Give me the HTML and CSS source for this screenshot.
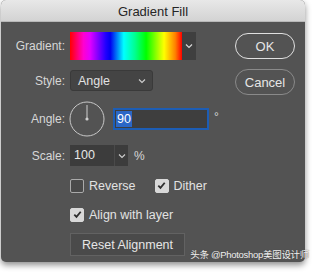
FILE: index.html
```html
<!DOCTYPE html>
<html>
<head>
<meta charset="utf-8">
<link rel="stylesheet" href="styles.css">
</head>
<body>
<div class="window">
  <div class="titlebar">Gradient Fill</div>
  <div class="content">
    <div class="form">
      <div class="row row-gradient">
        <span class="label">Gradient:</span>
        <div class="gradient-picker">
          <div class="swatch"></div>
          <div class="drop"><svg width="8" height="6" viewBox="0 0 8 6"><path d="M1 1.5 L4 4.5 L7 1.5" fill="none" stroke="#d8d8d8" stroke-width="1.2"/></svg></div>
        </div>
      </div>
      <div class="row row-style">
        <span class="label">Style:</span>
        <div class="select">
          <span>Angle</span>
          <svg width="8" height="6" viewBox="0 0 8 6"><path d="M1 1.5 L4 4.5 L7 1.5" fill="none" stroke="#cfcfcf" stroke-width="1.1"/></svg>
        </div>
      </div>
      <div class="row row-angle">
        <span class="label">Angle:</span>
        <svg class="dial" width="36" height="36" viewBox="0 0 36 36"><circle cx="18" cy="18" r="17" fill="none" stroke="#c8c8c8" stroke-width="1"/><line x1="18" y1="4" x2="18" y2="18" stroke="#d0d0d0" stroke-width="1"/><circle cx="18" cy="18" r="1.6" fill="#d0d0d0"/></svg>
        <div class="angle-input"><span class="sel">90</span></div>
        <span class="deg">°</span>
      </div>
      <div class="row row-scale">
        <span class="label">Scale:</span>
        <div class="combo">
          <span class="val">100</span>
          <span class="cdrop"><svg width="8" height="6" viewBox="0 0 8 6"><path d="M1 1.5 L4 4.5 L7 1.5" fill="none" stroke="#cfcfcf" stroke-width="1.1"/></svg></span>
        </div>
        <span class="pct">%</span>
      </div>
      <div class="row row-checks">
        <span class="label"></span>
        <label class="check"><span class="box"></span>Reverse</label>
        <label class="check dither"><span class="box on"><svg width="11" height="11" viewBox="0 0 11 11"><path d="M2.3 5.6 L4.5 7.9 L8.7 2.8" fill="none" stroke="#2e2e2e" stroke-width="1.8"/></svg></span>Dither</label>
      </div>
      <div class="row row-align">
        <span class="label"></span>
        <label class="check"><span class="box on"><svg width="11" height="11" viewBox="0 0 11 11"><path d="M2.3 5.6 L4.5 7.9 L8.7 2.8" fill="none" stroke="#2e2e2e" stroke-width="1.8"/></svg></span>Align with layer</label>
      </div>
      <div class="row row-reset">
        <span class="label"></span>
        <button class="reset">Reset Alignment</button>
      </div>
    </div>
    <div class="buttons">
      <button class="pill ok">OK</button>
      <button class="pill cancel">Cancel</button>
    </div>
  </div>
  <div class="watermark">头条 @Photoshop美图设计师</div>
</div>
</body>
</html>
```
FILE: styles.css
```css
html, body {
  margin: 0;
  padding: 0;
  background: #ffffff;
  width: 314px;
  height: 275px;
  overflow: hidden;
  font-family: "Liberation Sans", Arial, "Noto Sans CJK SC", sans-serif;
}

.window {
  position: relative;
  margin-left: 1px;
  width: 304px;
  height: 262px;
  background: #535353;
  border-radius: 5px;
  box-shadow: 0 3px 6px rgba(0,0,0,0.45);
  display: flex;
  flex-direction: column;
}

.titlebar {
  height: 22px;
  line-height: 23px;
  text-align: center;
  font-size: 13px;
  color: #262626;
  background: linear-gradient(#e8e8e8, #d3d3d3);
  border-bottom: 1px solid #b8b8b8;
  border-radius: 5px 5px 0 0;
  box-sizing: border-box;
  flex: none;
}

.content {
  display: flex;
  flex: 1;
}

.form {
  width: 230px;
  display: flex;
  flex-direction: column;
}

.row {
  display: flex;
  align-items: center;
}

.label {
  width: 64px;
  text-align: right;
  font-size: 12px;
  color: #d7d7d7;
  margin-right: 5px;
  flex: none;
}

.row-gradient { margin-top: 10px; height: 28px; }

.gradient-picker {
  display: flex;
  height: 28px;
}
.swatch {
  width: 112px;
  height: 28px;
  background: linear-gradient(to right,
    #ff0000 0%, #ff00d0 12%, #e000ff 18%, #2000ff 32%, #0000f0 36%,
    #00ffff 48%, #00ff90 58%, #00ff00 68%, #c0ff00 80%, #ffff00 84%, #ff8000 94%, #ff0000 100%);
}
.drop {
  width: 14px;
  height: 28px;
  background: #3f3f3f;
  display: flex;
  align-items: center;
  justify-content: center;
}

.row-style { margin-top: 10px; height: 21px; }
.select {
  width: 83px;
  height: 21px;
  box-sizing: border-box;
  background: #444444;
  border: 1px solid #3a3a3a;
  border-radius: 3px;
  display: flex;
  align-items: center;
  justify-content: space-between;
  padding: 0 6px 0 7px;
  font-size: 12.5px;
  color: #e2e2e2;
}

.row-angle { margin-top: 10px; height: 36px; }
.dial { flex: none; margin-left: -1px; }
.angle-input {
  margin-left: 8px;
  width: 96px;
  height: 22px;
  box-sizing: border-box;
  border: 2px solid #1d5db4;
  background: #3e3e3e;
  display: flex;
  align-items: center;
  padding-left: 1px;
}
.sel {
  background: #2b67c6;
  color: #ffffff;
  font-size: 12.5px;
  line-height: 16px;
  padding: 0 1px;
}
.deg {
  font-size: 12px;
  color: #d7d7d7;
  margin-left: 5px;
  margin-top: -4px;
}

.row-scale { margin-top: 8px; height: 21px; }
.combo {
  display: flex;
  height: 21px;
  background: #3c3c3c;
}
.val {
  width: 44px;
  font-size: 12.5px;
  color: #e6e6e6;
  padding-left: 4px;
  box-sizing: border-box;
  line-height: 21px;
}
.cdrop {
  width: 13px;
  border-left: 1px solid #4a4a4a;
  display: flex;
  align-items: center;
  justify-content: center;
}
.pct {
  font-size: 12px;
  color: #d7d7d7;
  margin-left: 6px;
}

.row-checks { margin-top: 12px; height: 15px; }
.row-align { margin-top: 14px; height: 15px; }

.check {
  display: flex;
  align-items: center;
  font-size: 12.5px;
  color: #e2e2e2;
}
.dither { margin-left: 19px; }
.box {
  width: 14px;
  height: 14px;
  box-sizing: border-box;
  border: 1px solid #aaaaaa;
  background: #4a4a4a;
  border-radius: 2px;
  margin-right: 5px;
  display: flex;
  align-items: center;
  justify-content: center;
}
.box.on {
  background: #d8d8d8;
  border-color: #d8d8d8;
}

.row-reset { margin-top: 11px; height: 23px; }
.reset {
  height: 23px;
  width: 115px;
  box-sizing: border-box;
  background: #4a4a4a;
  border: 1px solid #626262;
  color: #e6e6e6;
  font-family: inherit;
  font-size: 12.5px;
  padding: 0;
}

.buttons {
  display: flex;
  flex-direction: column;
  gap: 10px;
  padding-top: 11px;
  margin-left: 4px;
}
.pill {
  width: 60px;
  height: 26px;
  box-sizing: border-box;
  border-radius: 13px;
  background: transparent;
  font-family: inherit;
  font-size: 13px;
  color: #e6e6e6;
  padding: 0;
}
.ok { border: 1px solid #e0e0e0; }
.cancel { border: 1px solid #8a8a8a; }

.watermark {
  position: absolute;
  right: -4px;
  bottom: 1px;
  font-size: 9.5px;
  color: #f0f0f0;
  text-shadow: 0 0 1px #444;
  letter-spacing: -0.3px;
  white-space: nowrap;
}
```
